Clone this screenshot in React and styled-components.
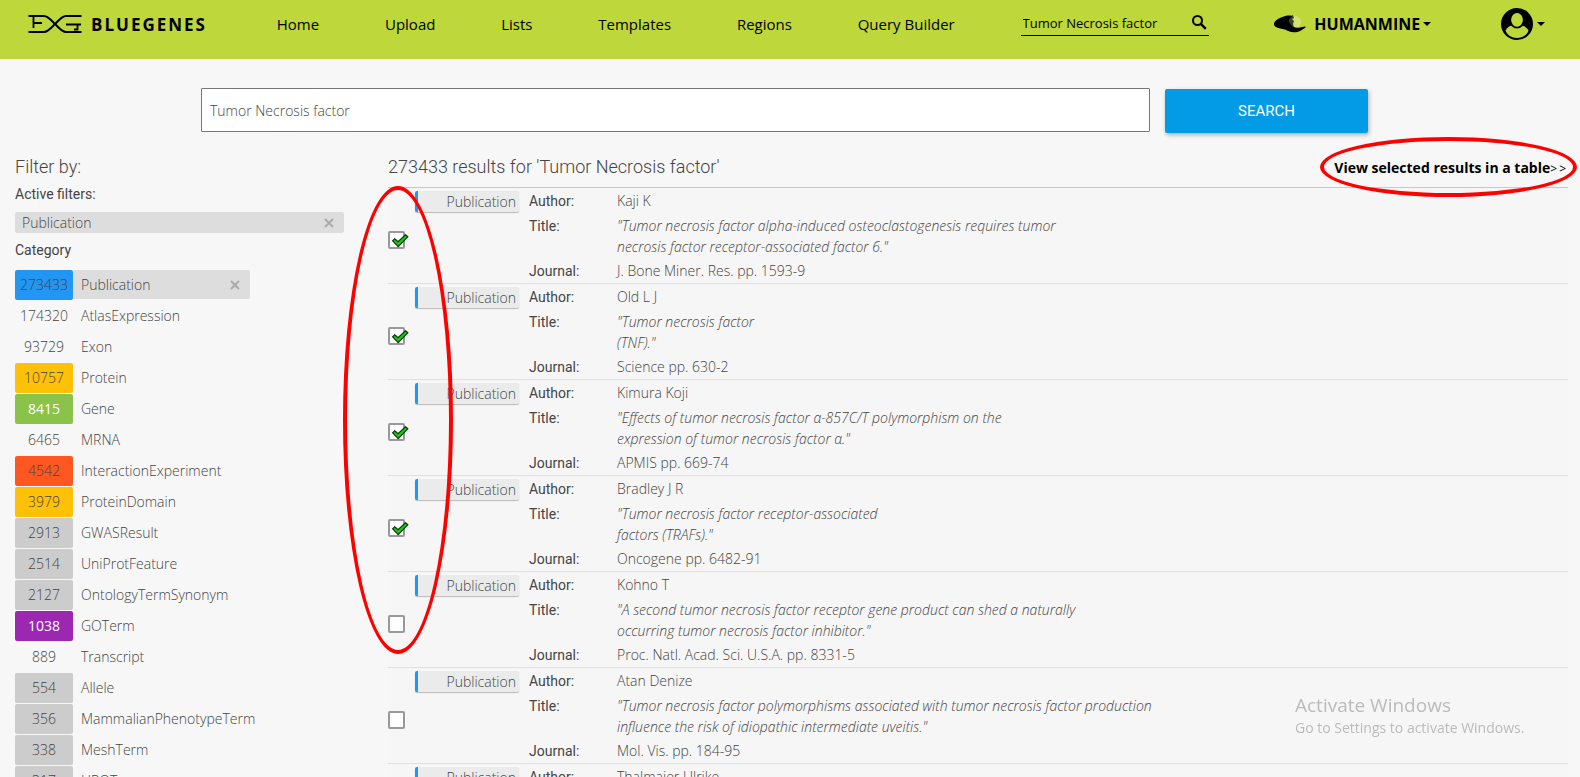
import React from 'react';
import styled, { createGlobalStyle } from 'styled-components';

const GlobalStyle = createGlobalStyle`
  * { box-sizing: border-box; }
  body {
    margin: 0;
    background: #f7f7f7;
    color: #444;
    font-family: 'Open Sans', 'Noto Sans', sans-serif;
    font-size: 14px;
    font-weight: 300;
    line-height: 21px;
  }
  input, button { font: inherit; color: inherit; }
  a { color: inherit; text-decoration: none; }
  ul, dl, dd { margin: 0; padding: 0; list-style: none; }
`;

const Page = styled.div`
  height: 100vh;
  overflow: hidden;
`;

const Header = styled.header`
  display: flex;
  align-items: center;
  justify-content: space-between;
  height: 59px;
  padding: 0 35px 11px 28px;
  background: #bed73b;
  color: #000;
  font-size: 15px;
  font-weight: 400;
  white-space: nowrap;
`;

const Brand = styled.a`
  display: flex;
  align-items: center;
  gap: 9px;
  margin-right: 4px;
  font-size: 17px;
  font-weight: 700;
  letter-spacing: 2px;
`;

const HeaderSearch = styled.form`
  display: flex;
  align-items: center;
  width: 188px;
  height: 24px;
  border-bottom: 1px solid #000;
`;

const HeaderInput = styled.input`
  flex: 1;
  min-width: 0;
  padding: 0 2px;
  border: 0;
  outline: 0;
  background: none;
  font-size: 13px;
`;

const IconButton = styled.button`
  display: flex;
  align-items: center;
  padding: 0;
  border: 0;
  background: none;
  cursor: pointer;
`;

const SearchIconButton = styled(IconButton)`
  padding: 0 2px 2px;
`;

const MineButton = styled(IconButton)`
  gap: 8px;
  margin-right: 4px;
  font-size: 16px;
  font-weight: 700;
`;

const Caret = styled.span`
  border: 4px solid transparent;
  border-top-color: #000;
  border-bottom: 0;
  margin-left: ${(p) => (p.$spaced ? '4px' : '-5px')};
`;

const SearchBar = styled.form`
  display: flex;
  align-items: flex-end;
  gap: 15px;
  height: 74px;
  padding: 0 212px 0 201px;
`;

const SearchInput = styled.input`
  flex: 1;
  height: 44px;
  margin-bottom: 1px;
  padding: 0 8px;
  border: 1px solid #767676;
  border-radius: 1px;
  background: #fff;
`;

const SearchButton = styled.button`
  width: 203px;
  height: 44px;
  border: 0;
  border-radius: 2px;
  background: #039be5;
  box-shadow: 1px 2px 4px rgba(0, 0, 0, 0.3);
  color: #fff;
  font-family: Roboto, sans-serif;
  font-size: 15px;
  font-weight: 400;
`;

const Content = styled.main`
  display: grid;
  grid-template-columns: 329px minmax(0, 1fr);
  gap: 44px;
  padding: 22px 12px 0 15px;
`;

const Heading = styled.h2`
  margin: 0;
  font-family: Roboto, sans-serif;
  font-size: 18px;
  font-weight: 300;
  line-height: 24px;
`;

const SubHeading = styled.h3`
  margin: 0;
  padding: ${(p) => p.$padding};
  font-family: Roboto, sans-serif;
  font-size: 14px;
  font-weight: 400;
  line-height: 20px;
`;

const ActiveFilter = styled.div`
  display: flex;
  align-items: center;
  justify-content: space-between;
  height: 21px;
  padding: 0 10px 0 7px;
  border-radius: 2px;
  background: #ddd;
`;

const CategoryList = styled.ul`
  display: grid;
  gap: 1px;
`;

const CategoryRow = styled.li`
  display: flex;
  height: 30px;
  line-height: 29px;
`;

const Count = styled.span`
  width: 58px;
  border-radius: 2px;
  text-align: center;
  background: ${(p) => p.$color || 'transparent'};
  color: ${(p) => (p.$light ? '#fff' : 'inherit')};
  font-weight: ${(p) => (p.$light ? 400 : 300)};
`;

const CategoryName = styled.a`
  display: flex;
  align-items: center;
  justify-content: space-between;
  width: 177px;
  height: 29px;
  padding: 0 10px 0 8px;
  border-radius: 0 2px 2px 0;
  background: ${(p) => (p.$active ? '#ddd' : 'transparent')};
`;

const Results = styled.section`
  position: relative;
`;

const ResultsHeader = styled.div`
  display: flex;
  justify-content: space-between;
  height: 33px;
  border-bottom: 1px solid #c8c8c8;
`;

const TableLink = styled.a`
  position: relative;
  height: 24px;
  color: #000;
  font-weight: 700;
  line-height: 26px;
`;

const Arrows = styled.span`
  font-size: 12px;
  font-weight: 400;
  letter-spacing: 2px;
`;

const LinkRing = styled.span`
  position: absolute;
  inset: -18px -9px -18px -14px;
  border: 4px solid #f00;
  border-radius: 50%;
  pointer-events: none;
`;

const TickRing = styled.span`
  position: absolute;
  top: 31px;
  left: -45px;
  width: 110px;
  height: 468px;
  border: 4px solid #f00;
  border-radius: 50%;
  pointer-events: none;
`;

const ResultRow = styled.li`
  display: grid;
  grid-template-columns: 17px 104px minmax(0, 1fr);
  column-gap: 10px;
  align-items: start;
  height: 96px;
  padding-top: 2px;
  border-bottom: 1px solid #e0e0e0;
  background: #f6f6f6;
`;

const Tick = styled.label`
  position: relative;
  align-self: center;
  height: 18px;
  margin-top: 6px;

  input {
    display: block;
    width: 17px;
    height: 18px;
    margin: 0;
    appearance: none;
    border: 2px solid #999;
    border-radius: 2px;
    background: #fff;
  }
  svg {
    position: absolute;
    top: 3px;
    left: 4px;
    display: none;
    pointer-events: none;
  }
  input:checked + svg { display: block; }
`;

const Tag = styled.span`
  height: 21px;
  margin-top: 1px;
  padding-right: 3px;
  border-left: 3px solid #2196f3;
  border-radius: 2px;
  background: #ebebeb;
  box-shadow: 0 1px 1px rgba(0, 0, 0, 0.25);
  text-align: right;
`;

const TagSlot = styled.div`
  display: grid;
`;

const Details = styled.dl`
  display: grid;
  grid-template-columns: 88px minmax(0, 1fr);
  align-items: baseline;
  row-gap: 3px;
`;

const Term = styled.dt`
  font-family: Roboto, sans-serif;
  font-weight: 400;
`;

const Value = styled.dd`
  font-style: ${(p) => (p.$quote ? 'italic' : 'normal')};
`;

const Watermark = styled.aside`
  position: fixed;
  right: 49px;
  bottom: 39px;
  width: 236px;
  color: #bbb;
  font-weight: 400;
  line-height: 20px;
  white-space: nowrap;
  pointer-events: none;
`;

const WatermarkTitle = styled.div`
  font-size: 19px;
  line-height: 26px;
`;

const Logo = () => (
  <svg width="54" height="20" viewBox="0 0 54 20" fill="none" stroke="#000" strokeWidth="2" aria-hidden="true">
    <path d="M.5 2H16C20 2 23 6 27 10S34 18 38 18H53.500" />
    <path d="M.5 18H16C20 18 23 14 27 10S34 2 38 2H53.500" />
    <path d="M5.500 2V14M5.500 9H14M38 10.500H53M49.500 10.500V16.500M46 15.500H50" strokeWidth="1.800" />
  </svg>
);

const SearchIcon = () => (
  <svg width="15" height="15" viewBox="0 0 15 15" fill="none" stroke="#000" aria-hidden="true">
    <circle cx="5.500" cy="5.500" r="4.500" strokeWidth="2" />
    <path d="M8.800 8.800L13.800 13.800" strokeWidth="2.400" />
  </svg>
);

const HandIcon = () => (
  <svg width="32" height="20" viewBox="0 0 32 20" aria-hidden="true">
    <circle cx="20.500" cy="8" r="6.500" fill="#d3e070" />
    <path d="M15 3l4-2 1 3-2 1 2 2-1 3 1 3-4-2z" fill="#38421a" />
    <path
      d="M0 9.500C1 6.500 5 4 9 2.800 12 1.500 15 1.300 17.500 1.700c.8.300.4 1.200-.4 1.600C15.500 4.500 15.300 6 15.500 7.500c.5 2.500 1.800 4 3.800 5.200 2.400 1.300 5 1.500 7.700.500l3.800-.6c1 0 1 1-.2 1.700-2 1-3.500 2.700-6.500 3.500-5 1.200-9 .2-12.500-2C8 14.500 4 14.300 1.500 12.700.2 11.800-.2 10.500 0 9.500z"
      fill="#000"
    />
  </svg>
);

const UserIcon = () => (
  <svg width="32" height="32" viewBox="0 0 32 32" aria-hidden="true">
    <circle cx="16" cy="16" r="16" fill="#000" />
    <path d="M4.500 22.500C6 19.500 8.500 18 11 17.500h10c2.500.5 5 2 6.500 5C26 27 21.500 30 16 30S6 27 4.500 22.500z" fill="#bed73b" />
    <ellipse cx="16" cy="11.800" rx="6.800" ry="7.800" fill="#bed73b" stroke="#000" strokeWidth="1.800" />
  </svg>
);

const CheckIcon = () => (
  <svg width="17" height="14" viewBox="0 0 17 14" aria-hidden="true">
    <path d="M.7 6.800L2.800 4.800 6 7.800 13.600.8 15.800 2.800 6.200 12.700z" fill="#1fc41f" stroke="#083808" strokeWidth="1.200" />
  </svg>
);

const CloseIcon = () => (
  <svg width="10" height="10" viewBox="0 0 10 10" stroke="#aaa" strokeWidth="2" aria-hidden="true">
    <path d="M1 1l8 8M9 1l-8 8" />
  </svg>
);

const NAV = ['Home', 'Upload', 'Lists', 'Templates', 'Regions', 'Query Builder'];

const GREY = '#ccc';
const CATEGORIES = [
  { count: 273433, name: 'Publication', color: '#2196f3', active: true },
  { count: 174320, name: 'AtlasExpression' },
  { count: 93729, name: 'Exon' },
  { count: 10757, name: 'Protein', color: '#ffc107' },
  { count: 8415, name: 'Gene', color: '#8bc34a', light: true },
  { count: 6465, name: 'MRNA' },
  { count: 4542, name: 'InteractionExperiment', color: '#ff5722' },
  { count: 3979, name: 'ProteinDomain', color: '#ffc107' },
  { count: 2913, name: 'GWASResult', color: GREY },
  { count: 2514, name: 'UniProtFeature', color: GREY },
  { count: 2127, name: 'OntologyTermSynonym', color: GREY },
  { count: 1038, name: 'GOTerm', color: '#9c27b0', light: true },
  { count: 889, name: 'Transcript' },
  { count: 554, name: 'Allele', color: GREY },
  { count: 356, name: 'MammalianPhenotypeTerm', color: GREY },
  { count: 338, name: 'MeshTerm', color: GREY },
  { count: 317, name: 'HPOTerm', color: GREY },
];

const RESULTS = [
  { author: 'Kaji K', title: ['"Tumor necrosis factor alpha-induced osteoclastogenesis requires tumor', 'necrosis factor receptor-associated factor 6."'], journal: 'J. Bone Miner. Res. pp. 1593-9', checked: true },
  { author: 'Old L J', title: ['"Tumor necrosis factor', '(TNF)."'], journal: 'Science pp. 630-2', checked: true },
  { author: 'Kimura Koji', title: ['"Effects of tumor necrosis factor α-857C/T polymorphism on the', 'expression of tumor necrosis factor α."'], journal: 'APMIS pp. 669-74', checked: true },
  { author: 'Bradley J R', title: ['"Tumor necrosis factor receptor-associated', 'factors (TRAFs)."'], journal: 'Oncogene pp. 6482-91', checked: true },
  { author: 'Kohno T', title: ['"A second tumor necrosis factor receptor gene product can shed a naturally', 'occurring tumor necrosis factor inhibitor."'], journal: 'Proc. Natl. Acad. Sci. U.S.A. pp. 8331-5' },
  { author: 'Atan Denize', title: ['"Tumor necrosis factor polymorphisms associated with tumor necrosis factor production', 'influence the risk of idiopathic intermediate uveitis."'], journal: 'Mol. Vis. pp. 184-95' },
  { author: 'Thalmaier Ulrike' },
];

function Result({ author, title, journal, checked }) {
  return (
    <ResultRow>
      <Tick>
        <input type="checkbox" defaultChecked={checked} aria-label={`Select ${author}`} />
        <CheckIcon />
      </Tick>
      <TagSlot>
        <Tag>Publication</Tag>
      </TagSlot>
      <Details>
        <Term>Author:</Term>
        <Value>{author}</Value>
        {title && (
          <>
            <Term>Title:</Term>
            <Value $quote>
              {title[0]}
              <br />
              {title[1]}
            </Value>
            <Term>Journal:</Term>
            <Value>{journal}</Value>
          </>
        )}
      </Details>
    </ResultRow>
  );
}

export default function App() {
  return (
    <Page>
      <GlobalStyle />
      <Header>
        <Brand href="#">
          <Logo />
          BLUEGENES
        </Brand>
        {NAV.map((item) => (
          <a href="#" key={item}>{item}</a>
        ))}
        <HeaderSearch>
          <HeaderInput aria-label="Search" defaultValue="Tumor Necrosis factor" />
          <SearchIconButton type="button" aria-label="Run search">
            <SearchIcon />
          </SearchIconButton>
        </HeaderSearch>
        <MineButton type="button">
          <HandIcon />
          HUMANMINE
          <Caret />
        </MineButton>
        <IconButton type="button" aria-label="Account">
          <UserIcon />
          <Caret $spaced />
        </IconButton>
      </Header>

      <SearchBar>
        <SearchInput aria-label="Search term" defaultValue="Tumor Necrosis factor" />
        <SearchButton type="button">SEARCH</SearchButton>
      </SearchBar>

      <Content>
        <aside>
          <Heading>Filter by:</Heading>
          <SubHeading $padding="5px 0 8px">Active filters:</SubHeading>
          <ActiveFilter>
            Publication
            <IconButton type="button" aria-label="Remove filter">
              <CloseIcon />
            </IconButton>
          </ActiveFilter>
          <SubHeading $padding="7px 0 10px">Category</SubHeading>
          <CategoryList>
            {CATEGORIES.map((c) => (
              <CategoryRow key={c.name}>
                <Count $color={c.color} $light={c.light}>{c.count}</Count>
                <CategoryName href="#" $active={c.active}>
                  {c.name}
                  {c.active && <CloseIcon />}
                </CategoryName>
              </CategoryRow>
            ))}
          </CategoryList>
        </aside>

        <Results>
          <ResultsHeader>
            <Heading>273433 results for 'Tumor Necrosis factor'</Heading>
            <TableLink href="#">
              View selected results in a table<Arrows>&gt;&gt;</Arrows>
              <LinkRing />
            </TableLink>
          </ResultsHeader>
          <ul>
            {RESULTS.map((r) => (
              <Result key={r.author} {...r} />
            ))}
          </ul>
          <TickRing />
        </Results>
      </Content>

      <Watermark>
        <WatermarkTitle>Activate Windows</WatermarkTitle>
        Go to Settings to activate Windows.
      </Watermark>
    </Page>
  );
}
